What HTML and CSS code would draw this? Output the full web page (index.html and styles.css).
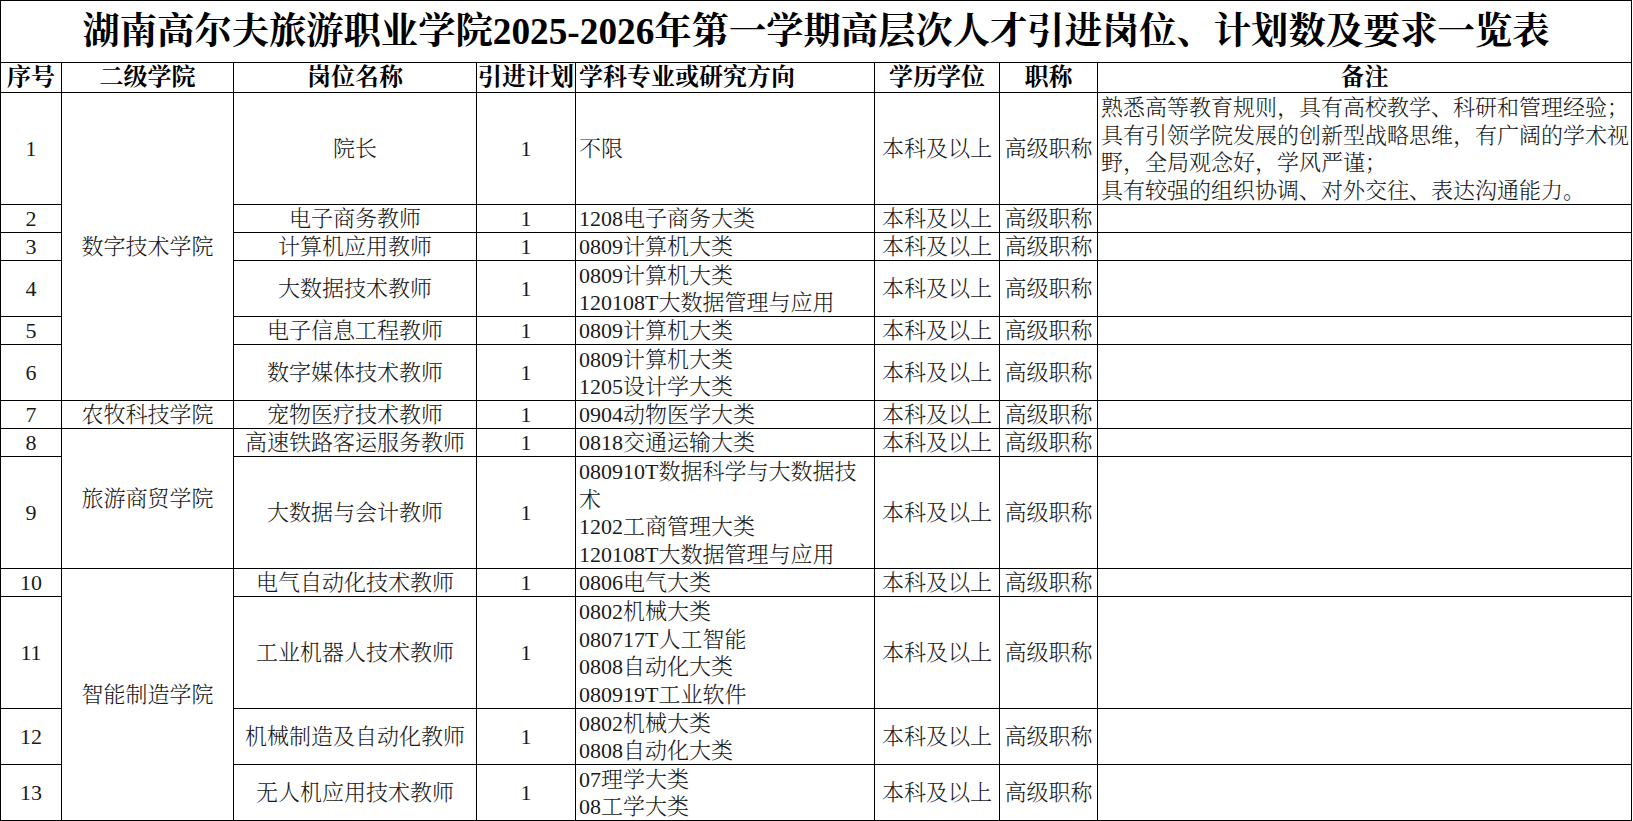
FILE: index.html
```html
<!DOCTYPE html>
<html lang="zh-CN">
<head>
<meta charset="utf-8">
<title>高层次人才引进岗位一览表</title>
<link rel="stylesheet" href="styles.css">
</head>
<body>
<div class="sheet">
  <div class="cell title">湖南高尔夫旅游职业学院2025-2026年第一学期高层次人才引进岗位、计划数及要求一览表</div>

  <div class="cell hd">序号</div>
  <div class="cell hd">二级学院</div>
  <div class="cell hd">岗位名称</div>
  <div class="cell hd">引进计划</div>
  <div class="cell hd left">学科专业或研究方向</div>
  <div class="cell hd">学历学位</div>
  <div class="cell hd">职称</div>
  <div class="cell hd">备注</div>

  <div class="cell">1</div>
  <div class="cell span6">数字技术学院</div>
  <div class="cell">院长</div>
  <div class="cell">1</div>
  <div class="cell left">不限</div>
  <div class="cell">本科及以上</div>
  <div class="cell">高级职称</div>
  <div class="cell left">熟悉高等教育规则，具有高校教学、科研和管理经验；<br>具有引领学院发展的创新型战略思维，有广阔的学术视<br>野，全局观念好，学风严谨；<br>具有较强的组织协调、对外交往、表达沟通能力。</div>

  <div class="cell">2</div>
  <div class="cell">电子商务教师</div>
  <div class="cell">1</div>
  <div class="cell left">1208电子商务大类</div>
  <div class="cell">本科及以上</div>
  <div class="cell">高级职称</div>
  <div class="cell"></div>

  <div class="cell">3</div>
  <div class="cell">计算机应用教师</div>
  <div class="cell">1</div>
  <div class="cell left">0809计算机大类</div>
  <div class="cell">本科及以上</div>
  <div class="cell">高级职称</div>
  <div class="cell"></div>

  <div class="cell">4</div>
  <div class="cell">大数据技术教师</div>
  <div class="cell">1</div>
  <div class="cell left">0809计算机大类<br>120108T大数据管理与应用</div>
  <div class="cell">本科及以上</div>
  <div class="cell">高级职称</div>
  <div class="cell"></div>

  <div class="cell">5</div>
  <div class="cell">电子信息工程教师</div>
  <div class="cell">1</div>
  <div class="cell left">0809计算机大类</div>
  <div class="cell">本科及以上</div>
  <div class="cell">高级职称</div>
  <div class="cell"></div>

  <div class="cell">6</div>
  <div class="cell">数字媒体技术教师</div>
  <div class="cell">1</div>
  <div class="cell left">0809计算机大类<br>1205设计学大类</div>
  <div class="cell">本科及以上</div>
  <div class="cell">高级职称</div>
  <div class="cell"></div>

  <div class="cell">7</div>
  <div class="cell">农牧科技学院</div>
  <div class="cell">宠物医疗技术教师</div>
  <div class="cell">1</div>
  <div class="cell left">0904动物医学大类</div>
  <div class="cell">本科及以上</div>
  <div class="cell">高级职称</div>
  <div class="cell"></div>

  <div class="cell">8</div>
  <div class="cell span2">旅游商贸学院</div>
  <div class="cell">高速铁路客运服务教师</div>
  <div class="cell">1</div>
  <div class="cell left">0818交通运输大类</div>
  <div class="cell">本科及以上</div>
  <div class="cell">高级职称</div>
  <div class="cell"></div>

  <div class="cell">9</div>
  <div class="cell">大数据与会计教师</div>
  <div class="cell">1</div>
  <div class="cell left">080910T数据科学与大数据技<br>术<br>1202工商管理大类<br>120108T大数据管理与应用</div>
  <div class="cell">本科及以上</div>
  <div class="cell">高级职称</div>
  <div class="cell"></div>

  <div class="cell">10</div>
  <div class="cell span4">智能制造学院</div>
  <div class="cell">电气自动化技术教师</div>
  <div class="cell">1</div>
  <div class="cell left">0806电气大类</div>
  <div class="cell">本科及以上</div>
  <div class="cell">高级职称</div>
  <div class="cell"></div>

  <div class="cell">11</div>
  <div class="cell">工业机器人技术教师</div>
  <div class="cell">1</div>
  <div class="cell left">0802机械大类<br>080717T人工智能<br>0808自动化大类<br>080919T工业软件</div>
  <div class="cell">本科及以上</div>
  <div class="cell">高级职称</div>
  <div class="cell"></div>

  <div class="cell">12</div>
  <div class="cell">机械制造及自动化教师</div>
  <div class="cell">1</div>
  <div class="cell left">0802机械大类<br>0808自动化大类</div>
  <div class="cell">本科及以上</div>
  <div class="cell">高级职称</div>
  <div class="cell"></div>

  <div class="cell">13</div>
  <div class="cell">无人机应用技术教师</div>
  <div class="cell">1</div>
  <div class="cell left">07理学大类<br>08工学大类</div>
  <div class="cell">本科及以上</div>
  <div class="cell">高级职称</div>
  <div class="cell"></div>
</div>
</body>
</html>
```

FILE: styles.css
```css
html, body {
  margin: 0;
  padding: 0;
  background: #fff;
}

.sheet {
  display: grid;
  grid-template-columns: 60px 171px 242px 98px 298px 124px 97px 533px;
  grid-template-rows: 61px 29px 111px 27px 27px 55px 27px 55px 27px 27px 111px 27px 111px 55px 55px;
  gap: 1px;
  padding: 1px;
  width: max-content;
  background: #000;
  font-family: "Liberation Serif", "Noto Serif CJK SC", "Noto Sans CJK SC", serif;
  font-size: 22px;
  font-weight: 300;
  color: #1a1a1a;
}

.cell {
  background: #fff;
  display: flex;
  align-items: center;
  justify-content: center;
  text-align: center;
  line-height: 27.5px;
  white-space: nowrap;
  overflow: hidden;
  padding-top: 1px;
}

.left {
  justify-content: flex-start;
  text-align: left;
  padding-left: 3px;
}

.title {
  grid-column: 1 / -1;
  font-size: 37.3px;
  font-weight: bold;
  color: #000;
}

.hd {
  font-size: 24px;
  font-weight: bold;
  color: #000;
  padding-top: 0;
}

.span2 { grid-row: span 2; }
.span4 { grid-row: span 4; }
.span6 { grid-row: span 6; }
```
